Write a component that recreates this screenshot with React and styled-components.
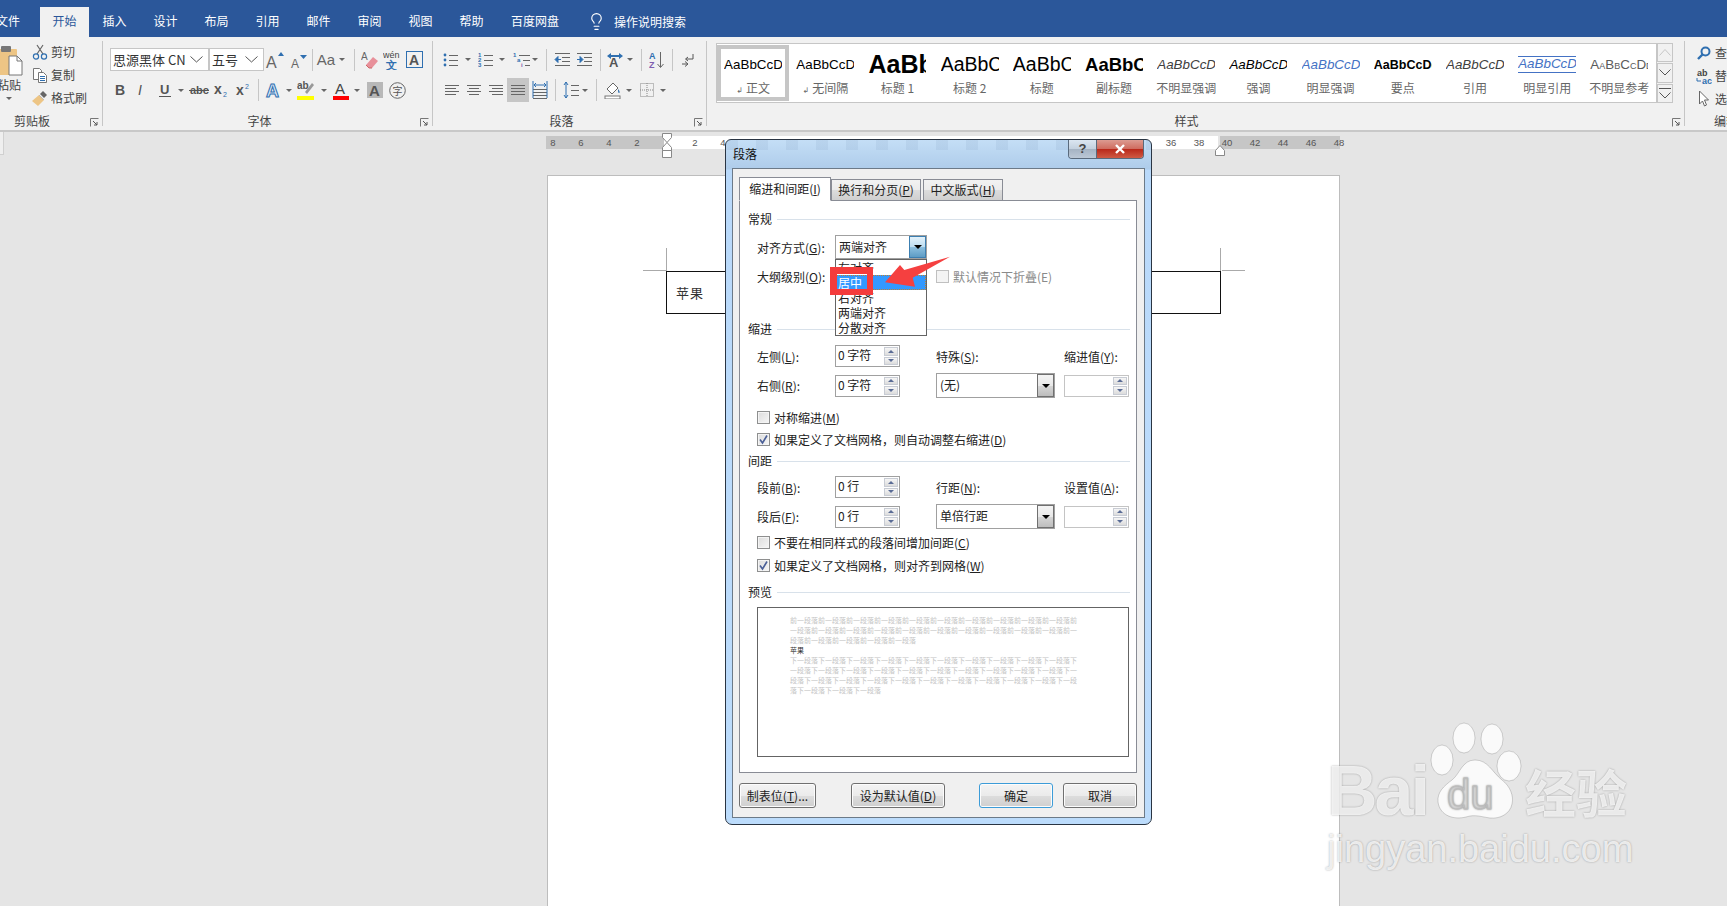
import React from 'react';
import styled, { createGlobalStyle } from 'styled-components';
import { Lightbulb } from 'lucide-react';

const CJK = '"Noto Sans CJK SC", "Noto Sans", sans-serif';
const LATIN = '"Liberation Sans", Arial, sans-serif';

const Global = createGlobalStyle`
  html, body { margin: 0; padding: 0; overflow: hidden; }
  * { box-sizing: border-box; }
  body { font-family: ${CJK}; font-size: 12px; color: #222; }
  svg text { font-family: ${LATIN}; }
  svg { display: block; flex-shrink: 0; }
`;

const Screen = styled.div`
  position: relative;
  width: 1727px;
  height: 906px;
  overflow: hidden;
  display: flex;
  flex-direction: column;
  background: #e5e5e5;
`;

/* title tabs */
const MenuBar = styled.div`
  height: 37px;
  background: #2b579a;
  display: flex;
  align-items: flex-end;
  flex-shrink: 0;
`;
const MenuTab = styled.div`
  width: ${p => p.$w || 51}px;
  margin-left: ${p => p.$ml || 0}px;
  height: 30px;
  line-height: 27px;
  text-align: center;
  color: ${p => (p.$active ? '#2b579a' : '#fff')};
  background: ${p => (p.$active ? '#f1f1f1' : 'transparent')};
  font-size: 12px;
  flex-shrink: 0;
`;
const TellMe = styled.div`
  display: flex;
  align-items: center;
  gap: 8px;
  margin-left: 14px;
  height: 30px;
  color: #fff;
  padding-bottom: 2px;
`;

/* ribbon */
const Ribbon = styled.div`
  height: 95px;
  flex-shrink: 0;
  padding-top: 4px;
  background: #f1f1f1;
  border-bottom: 2px solid #c8c8c8;
  display: flex;
`;
const Group = styled.div`
  position: relative;
  flex: ${p => (p.$w ? `0 0 ${p.$w}px` : '1')};
  height: 85px;
  border-right: ${p => (p.$w ? '1px solid #c6c6c6' : 'none')};
  display: flex;
  flex-direction: column;
`;
const GroupLabel = styled.div`
  margin-top: auto;
  margin-bottom: -4px;
  height: 18px;
  line-height: 18px;
  text-align: center;
  color: #444;
  font-size: 12px;
  white-space: nowrap;
  margin-left: ${p => p.$ml || 0}px;
`;
const EditLabel = styled(GroupLabel)`
  text-align: left;
  padding-left: 29px;
`;
const Launcher = styled.div`
  position: absolute;
  right: 3px;
  bottom: -1px;
`;
const Tools = styled.div`
  display: flex;
  height: ${p => p.$h || 24}px;
  margin-top: ${p => p.$mt || 0}px;
  padding-left: ${p => p.$pl || 0}px;
  align-items: center;
`;
const Slot = styled.div`
  flex: 0 0 ${p => p.$w}px;
  width: ${p => p.$w}px;
  height: ${p => p.$h || 24}px;
  display: flex;
  align-items: center;
  justify-content: center;
  background: ${p => (p.$active ? '#c6c6c6' : 'transparent')};
  overflow: visible;
`;
const Sep = styled(Slot)`
  &::after {
    content: '';
    width: 1px;
    height: 22px;
    background: #c6c6c6;
  }
`;
const Caret = styled(Slot)`
  &::after {
    content: '';
    border-left: 3px solid transparent;
    border-right: 3px solid transparent;
    border-top: 3px solid #666;
  }
`;
const CaseGlyph = styled.span`
  font-family: ${LATIN};
  font-size: 15px;
  color: #666;
`;
const Combo = styled.div`
  width: ${p => p.$w}px;
  height: 23px;
  flex-shrink: 0;
  border: 1px solid #c6c6c6;
  background: #fff;
  display: flex;
  align-items: center;
  justify-content: space-between;
  padding: 0 5px 0 2px;
  font-size: 13px;
  color: #333;
  white-space: nowrap;
`;

const ClipRow = styled.div`
  display: flex;
  flex: 1;
`;
const PasteCol = styled.div`
  width: 30px;
  margin-left: -6px;
  margin-right: 8px;
  padding-top: 4px;
  display: flex;
  flex-direction: column;
  align-items: center;
  color: #444;
  line-height: 18px;
`;
const SmallCol = styled.div`
  display: flex;
  flex-direction: column;
  margin-top: -1px;
`;
const SmallTool = styled.div`
  height: 23px;
  display: flex;
  align-items: center;
  gap: 3px;
  color: #444;
  white-space: nowrap;
`;
const IconBox = styled.div`
  width: 16px;
  display: flex;
  justify-content: center;
`;
const PasteCaret = styled.div`
  margin-top: 3px;
  border-left: 3px solid transparent;
  border-right: 3px solid transparent;
  border-top: 3px solid #666;
`;

const Gallery = styled.div`
  margin: 2px 0 0 9px;
  width: 957px;
  height: 60px;
  display: flex;
`;
const GalleryItems = styled.div`
  flex: 0 0 941px;
  border: 1px solid #c6c6c6;
  background: #fff;
  display: flex;
`;
const StyleItem = styled.div`
  flex: 0 0 72.2px;
  height: 56px;
  margin-top: 1px;
  border: ${p => (p.$active ? '4px solid #c6c6c6' : '4px solid transparent')};
  display: flex;
  flex-direction: column;
  align-items: center;
`;
const StyleSample = styled.div`
  width: 58px;
  height: 30px;
  margin-top: 1px;
  overflow: hidden;
  white-space: nowrap;
  display: flex;
  align-items: center;
  font-family: ${LATIN};
  font-size: ${p => p.$size || 13.4}px;
  font-weight: ${p => (p.$bold ? 700 : 400)};
  font-style: ${p => (p.$italic ? 'italic' : 'normal')};
  font-variant: ${p => (p.$caps ? 'small-caps' : 'normal')};
  color: ${p => p.$color || '#000'};
`;
const LinedText = styled.span`
  border-top: 1px solid #4472c4;
  border-bottom: 1px solid #4472c4;
  line-height: 14px;
  padding-bottom: 1px;
`;
const StyleName = styled.div`
  height: 18px;
  line-height: 18px;
  color: #666;
  font-size: 12px;
  white-space: nowrap;
`;
const ParaMark = styled.span`
  font-family: "DejaVu Sans", sans-serif;
  font-size: 8px;
  margin-right: 3px;
`;
const GalleryScroll = styled.div`
  flex: 0 0 16px;
  display: flex;
  flex-direction: column;
  gap: 1px;
`;
const ScrollBtn = styled.div`
  flex: 1;
  border: 1px solid #c6c6c6;
  background: #f1f1f1;
  display: flex;
  align-items: center;
  justify-content: center;
`;

/* workspace */
const Workspace = styled.div`
  flex: 1;
  min-height: 0;
  padding-left: 546px;
  display: flex;
  flex-direction: column;
  position: relative;
`;
const SideStub = styled.div`
  position: absolute;
  left: 0;
  top: 0;
  width: 4px;
  height: 23px;
  background: #efefef;
  border-right: 1px solid #d0d0d0;
  border-bottom: 1px solid #d0d0d0;
`;
const Ruler = styled.div`
  position: relative;
  margin-top: 4px;
  height: 13px;
  display: flex;
  flex-shrink: 0;
`;
const RulerPart = styled.div`
  flex: 0 0 ${p => p.$w}px;
  min-width: 0;
  margin-left: ${p => p.$ml || 0}px;
  height: 13px;
  background: ${p => (p.$white ? '#fff' : '#c6c6c6')};
  padding-left: ${p => p.$pl || 0}px;
  display: flex;
`;
const Tick = styled.span`
  flex: 0 0 28px;
  margin-left: ${p => p.$ml || 0}px;
  text-align: center;
  font-family: ${LATIN};
  font-size: 9.5px;
  line-height: 14px;
  color: #555;
`;
const Marker = styled.div`
  position: absolute;
  left: ${p => p.$x}px;
  top: ${p => p.$y}px;
`;
const Page = styled.div`
  margin: 26px 0 0 1px;
  width: 793px;
  flex: 1;
  background: #fff;
  border: 1px solid #bdbdbd;
  border-bottom: none;
  padding: 95px 0 0 118px;
`;
const DocTable = styled.div`
  position: relative;
  width: 555px;
  height: 43px;
  border: 1px solid #111;
  padding-left: 9px;
  display: flex;
  align-items: center;
  font-size: 13px;
  letter-spacing: 1px;
  color: #333;
`;
const CropV = styled.div`
  position: absolute;
  top: -24px;
  ${p => (p.$right ? 'right: -1px' : 'left: -1px')};
  width: 1px;
  height: 23px;
  background: #aaa;
`;
const CropH = styled.div`
  position: absolute;
  top: -2px;
  ${p => (p.$right ? 'right: -25px' : 'left: -24px')};
  width: 23px;
  height: 1px;
  background: #aaa;
`;

/* dialog */
const Dialog = styled.div`
  position: absolute;
  left: 725px;
  top: 139px;
  width: 427px;
  height: 686px;
  border: 1px solid #2a3543;
  border-radius: 6px 6px 7px 7px;
  background:
    repeating-linear-gradient(90deg, rgba(120,150,185,0.14) 0 12px, transparent 12px 30px) 0 0 / 100% 10px no-repeat,
    linear-gradient(180deg, #c4def6 0, #aeccea 29px, #b9d9fa 30px, #bcdcfc 100%);
  padding: 0 6px 6px;
  display: flex;
  flex-direction: column;
`;
const DialogTitle = styled.div`
  height: 28px;
  display: flex;
  justify-content: space-between;
  flex-shrink: 0;
  font-size: 12px;
  color: #111;
`;
const DialogName = styled.div`
  line-height: 27px;
  padding-left: 1px;
`;
const CaptionBtns = styled.div`
  display: flex;
  height: 19px;
  border: 1px solid #5a6a7c;
  border-top: none;
  border-radius: 0 0 4px 4px;
  overflow: hidden;
  margin-right: 1px;
`;
const HelpBtn = styled.div`
  width: 28px;
  text-align: center;
  line-height: 18px;
  font-family: ${LATIN};
  font-weight: 700;
  font-size: 13px;
  color: #444;
  background: linear-gradient(180deg, #dbe6f1 0, #c3d0de 50%, #a5b3c3 51%, #bcc8d6 100%);
  border-right: 1px solid #5a6a7c;
`;
const CloseBtn = styled.div`
  width: 46px;
  display: flex;
  align-items: center;
  justify-content: center;
  background: linear-gradient(180deg, #dc9b91 0, #cf6b5e 50%, #b9281a 51%, #cf5a44 100%);
`;
const DialogBody = styled.div`
  flex: 1;
  min-height: 0;
  border: 1px solid #6c7a88;
  background: #f0f0f0;
  padding: 8px 7px 0 6px;
  display: flex;
  flex-direction: column;
`;
const TabRow = styled.div`
  display: flex;
  height: 24px;
  align-items: flex-end;
  position: relative;
  z-index: 1;
  margin-bottom: -1px;
`;
const DlgTab = styled.div`
  width: ${p => p.$w}px;
  margin-left: ${p => p.$ml || 0}px;
  height: ${p => (p.$active ? 24 : 22)}px;
  line-height: ${p => (p.$active ? 22 : 20)}px;
  text-align: center;
  font-size: 12px;
  white-space: nowrap;
  border: 1px solid #898c95;
  border-bottom: ${p => (p.$active ? '1px solid #fff' : '1px solid #898c95')};
  background: ${p => (p.$active ? '#fff' : 'linear-gradient(180deg, #f2f2f2 0, #ebebeb 50%, #dddddd 51%, #cfcfcf 100%)')};
`;
const TabPanel = styled.div`
  height: 573px;
  border: 1px solid #898c95;
  background: #fff;
  padding: 10px 6px 0 8px;
`;
const SectionHead = styled.div`
  height: 16px;
  margin-top: ${p => p.$mt || 0}px;
  display: flex;
  align-items: center;
  gap: 5px;
  line-height: 16px;
  &::after {
    content: '';
    flex: 1;
    height: 1px;
    background: #d8e1ea;
  }
`;
const FormGrid = styled.div`
  display: grid;
  grid-template-columns: 78px 101px 128px 65px;
  align-items: center;
  margin: ${p => p.$mt || 0}px 0 0 9px;
  height: ${p => p.$h || 22}px;
  white-space: nowrap;
`;
const SelectWrap = styled.div`
  position: relative;
  width: ${p => p.$w}px;
  height: ${p => p.$h || 25}px;
  border: 1px solid #a0a0a0;
  background: #fff;
  padding-left: ${p => p.$pl || 3}px;
  line-height: ${p => (p.$h || 25) - 3}px;
  display: flex;
  justify-content: space-between;
`;
const SelectBtn = styled.div`
  width: 17px;
  border: 1px solid ${p => (p.$hot ? '#3c7fb1' : '#707070')};
  background: ${p => (p.$hot
    ? 'linear-gradient(180deg, #e3f2fb 0, #bcdcf0 50%, #8cbfdf 51%, #5e9cc4 100%)'
    : 'linear-gradient(180deg, #f4f4f4 0, #e8e8e8 50%, #d6d6d6 51%, #bdbdbd 100%)')};
  display: flex;
  align-items: center;
  justify-content: center;
  &::after {
    content: '';
    border-left: 4px solid transparent;
    border-right: 4px solid transparent;
    border-top: 4px solid #000;
  }
`;
const DropList = styled.div`
  position: absolute;
  left: -1px;
  top: 23px;
  width: 92px;
  height: 77px;
  border: 1px solid #646464;
  background: #fff;
  z-index: 2;
`;
const DropItem = styled.div`
  height: 15px;
  line-height: 15px;
  padding-left: 2px;
  overflow: hidden;
  color: ${p => (p.$sel ? '#fff' : '#222')};
  background: ${p => (p.$sel ? '#3399ff' : 'transparent')};
  outline: ${p => (p.$sel ? '1px dotted #c08030' : 'none')};
  outline-offset: -1px;
`;
const RedBox = styled.div`
  position: absolute;
  left: -6px;
  top: 31px;
  width: 43px;
  height: 28px;
  border: 7px solid #f43c3c;
  border-width: 7px 6px 6px 7px;
  z-index: 3;
`;
const ArrowMark = styled.div`
  position: absolute;
  left: 47px;
  top: 17px;
  z-index: 4;
`;
const Spin = styled.div`
  width: 65px;
  height: 22px;
  border: 1px solid ${p => (p.$off ? '#c4c4c4' : '#a0a0a0')};
  background: #fff;
  padding-left: 2px;
  line-height: 18px;
  display: flex;
  white-space: pre;
`;
const SpinBtns = styled.div`
  width: 15px;
  margin-left: auto;
  padding: 1px 1px 1px 0;
  display: flex;
  flex-direction: column;
  gap: 1px;
`;
const SpinBtn = styled.div`
  flex: 1;
  border: 1px solid #c8ccd4;
  background: linear-gradient(180deg, #f6f6f6 0, #dcdcdc 100%);
  display: flex;
  align-items: center;
  justify-content: center;
  &::after {
    content: '';
    border-left: 3px solid transparent;
    border-right: 3px solid transparent;
    ${p => (p.$down ? 'border-top' : 'border-bottom')}: 3px solid #5a6c96;
  }
`;
const CheckRow = styled.label`
  display: flex;
  align-items: center;
  gap: 4px;
  height: 16px;
  margin: ${p => p.$mt || 0}px 0 0 ${p => (p.$off ? 0 : 9)}px;
  color: ${p => (p.$off ? '#8a8a8a' : '#222')};
  white-space: nowrap;
`;
const Box = styled.span`
  width: 13px;
  height: 13px;
  flex-shrink: 0;
  border: 1px solid ${p => (p.$off ? '#c0c0c0' : '#8e8f8f')};
  background: ${p => (p.$off ? '#f4f4f4' : 'linear-gradient(135deg, #dcdcdc 0, #f6f6f6 100%)')};
  box-shadow: inset 0 0 0 1px #f4f4f4;
  display: flex;
  align-items: center;
  justify-content: center;
`;
const Preview = styled.div`
  margin: 7px 0 0 9px;
  width: 372px;
  height: 150px;
  border: 1px solid #646464;
  background: #fff;
  padding: 7px 0 0 32px;
`;
const PreviewText = styled.div`
  width: 288px;
  font-size: 7px;
  line-height: 10px;
  word-break: break-all;
  color: ${p => (p.$dark ? '#333' : '#c4c4c4')};
`;
const BtnRow = styled.div`
  display: flex;
  margin-top: 10px;
`;
const DlgBtn = styled.div`
  width: ${p => p.$w}px;
  margin-left: ${p => p.$ml || 0}px;
  height: 25px;
  line-height: 23px;
  text-align: center;
  border: 1px solid ${p => (p.$def ? '#3c9cd8' : '#707070')};
  border-radius: 3px;
  box-shadow: inset 0 0 0 1px #fcfcfc;
  background: linear-gradient(180deg, #f3f3f3 0, #ebebeb 50%, #dddddd 51%, #cfcfcf 100%);
  white-space: nowrap;
`;

/* watermark */
const Watermark = styled.div`
  position: absolute;
  left: 1327px;
  top: 722px;
  color: rgba(255, 255, 255, 0.8);
  text-shadow: 0 0 2px rgba(0, 0, 0, 0.35);
  pointer-events: none;
`;
const WmTop = styled.div`
  display: flex;
  align-items: flex-end;
  height: 98px;
`;
const WmLatin = styled.div`
  font-family: ${LATIN};
  font-weight: 700;
  font-size: 70px;
  line-height: 58px;
  letter-spacing: -3px;
  width: 103px;
`;
const WmCjk = styled.div`
  font-weight: 700;
  font-size: 51px;
  line-height: 58px;
  margin-left: 3px;
  white-space: nowrap;
`;
const WmUrl = styled.div`
  font-family: ${LATIN};
  font-size: 38px;
  line-height: 46px;
  margin-top: 6px;
  white-space: nowrap;
`;

/* small drawings */
const I = ({ w = 16, h = 16, children }) => (
  <svg width={w} height={h} viewBox={`0 0 ${w} ${h}`} fill="none">{children}</svg>
);
const Lines = ({ items, color = '#666' }) => items.map(([x1, x2, y], i) => (
  <line key={i} x1={x1} x2={x2} y1={y + 0.5} y2={y + 0.5} stroke={color} />
));
const Glyph = ({ x = 0, y = 13, s = 14, c = '#555', b, it, children }) => (
  <text x={x} y={y} fontSize={s} fill={c} fontWeight={b ? 700 : 400} fontStyle={it ? 'italic' : 'normal'}>{children}</text>
);

const PasteIcon = () => (
  <I w={32} h={31}>
    <rect x="2" y="4" width="22" height="26" rx="1" fill="#edc585" />
    <rect x="8" y="1" width="10" height="6" rx="1" fill="#777" />
    <path d="M16 11h8l5 5v14H16z" fill="#fff" stroke="#777" />
    <path d="M24 11v5h5" stroke="#777" />
  </I>
);
const CutIcon = () => (
  <I>
    <path d="M5 10 11 1M11 10 5 1" stroke="#666" strokeWidth="1.2" />
    <circle cx="4" cy="12.5" r="2.6" stroke="#2f6fb0" strokeWidth="1.2" />
    <circle cx="12" cy="12.5" r="2.6" stroke="#2f6fb0" strokeWidth="1.2" />
  </I>
);
const CopyIcon = () => (
  <I>
    <path d="M1.5 1.5h6l2 2v9h-8z" fill="#fff" stroke="#777" />
    <path d="M6.5 5.5h5l3 3v7h-8z" fill="#fff" stroke="#777" />
    <Lines color="#2f6fb0" items={[[8, 13, 9], [8, 13, 11], [8, 13, 13]]} />
  </I>
);
const BrushIcon = () => (
  <I w={18} h={16}>
    <path d="M1 11 8 5l5 5-6 6z" fill="#edc585" />
    <path d="M9 4l3-3 4 4-3 3z" fill="#666" />
    <path d="M8 5l5 5" stroke="#bbb" />
  </I>
);
const GrowIcon = ({ small }) => (
  <I w={20} h={18}>
    <Glyph x={small ? 3 : 1} y={17} s={small ? 12 : 16} c="#666">A</Glyph>
    <path d={small ? 'M12 4h7l-3.5 4z' : 'M13 5h6l-3-4z'} fill="#2f6fb0" />
  </I>
);
const EraserIcon = () => (
  <I w={18} h={18}>
    <Glyph x={0} y={9} s={10} c="#666">A</Glyph>
    <path d="M5 14l7-8 5 4-6 7H8z" fill="#e8909a" />
    <path d="M5 14l3 3h3" stroke="#c66" />
  </I>
);
const PinyinIcon = () => (
  <I w={18} h={20}>
    <Glyph x={0} y={8} s={9} c="#444">wén</Glyph>
    <Glyph x={3} y={19} s={11} c="#2f6fb0" b>文</Glyph>
  </I>
);
const BoxA = () => (
  <I w={17} h={17}>
    <rect x="0.5" y="0.5" width="16" height="16" stroke="#2f6fb0" />
    <Glyph x={3} y={14} s={14} c="#555" b>A</Glyph>
  </I>
);
const Bold = () => <I><Glyph x={3} y={13} b>B</Glyph></I>;
const Ital = () => <I><Glyph x={4} y={13} it>I</Glyph></I>;
const Under = () => (
  <I><Glyph x={3} y={12} s={13} b>U</Glyph><line x1="2" x2="14" y1="14.5" y2="14.5" stroke="#555" /></I>
);
const Strike = () => (
  <I w={20}><Glyph x={1} y={12} s={11} b>abc</Glyph><line x1="0" x2="20" y1="8.5" y2="8.5" stroke="#555" /></I>
);
const Sub = () => <I><Glyph x={1} y={12} s={14} b>x</Glyph><Glyph x={10} y={15} s={7} c="#2f6fb0">2</Glyph></I>;
const Sup = () => <I><Glyph x={1} y={13} s={14} b>x</Glyph><Glyph x={10} y={7} s={7} c="#2f6fb0">2</Glyph></I>;
const EffectA = () => (
  <I w={18} h={18}>
    <text x="2" y="16" fontSize="18" fontWeight="700" fill="#dbe8f6" stroke="#2f6fb0">A</text>
  </I>
);
const Highlight = () => (
  <I w={18} h={20}>
    <Glyph x={0} y={9} s={10} b>ab</Glyph>
    <path d="M8 12 15 3l2 2-7 9z" fill="#999" />
    <rect x="0" y="16" width="17" height="4" fill="#ffff00" />
  </I>
);
const RedA = () => (
  <I w={18} h={20}>
    <Glyph x={3} y={14} s={15} c="#444">A</Glyph>
    <rect x="1" y="16" width="16" height="4" fill="#ff0000" />
  </I>
);
const GrayA = () => (
  <I w={16} h={16}>
    <rect width="16" height="16" fill="#b8b8b8" />
    <Glyph x={2} y={14} s={15} c="#555" b>A</Glyph>
  </I>
);
const CircleZi = () => (
  <I w={17} h={17}>
    <circle cx="8.5" cy="8.5" r="7.8" stroke="#666" />
    <text x="3.5" y="12.5" fontSize="10" fill="#555" style={{ fontFamily: CJK }}>字</text>
  </I>
);
const Bullets = () => (
  <I>
    <circle cx="2" cy="3" r="1.4" fill="#2f6fb0" /><circle cx="2" cy="8" r="1.4" fill="#2f6fb0" /><circle cx="2" cy="13" r="1.4" fill="#2f6fb0" />
    <Lines items={[[6, 15, 3], [6, 15, 8], [6, 15, 13]]} />
  </I>
);
const Numbers = () => (
  <I>
    <Glyph x={0} y={5} s={6} c="#2f6fb0" b>1</Glyph><Glyph x={0} y={10} s={6} c="#2f6fb0" b>2</Glyph><Glyph x={0} y={15} s={6} c="#2f6fb0" b>3</Glyph>
    <Lines items={[[6, 15, 3], [6, 15, 8], [6, 15, 13]]} />
  </I>
);
const MultiList = () => (
  <I w={18}>
    <Glyph x={0} y={5} s={6} c="#2f6fb0" b>1</Glyph><Glyph x={4} y={10} s={6} c="#2f6fb0" b>a</Glyph><Glyph x={8} y={15} s={6} c="#7f5fb0" b>i</Glyph>
    <Lines items={[[6, 17, 3], [10, 17, 8], [12, 17, 13]]} />
  </I>
);
const IndentIcon = ({ inc }) => (
  <I w={17}>
    <Lines items={[[1, 16, 1], [8, 16, 5], [8, 16, 9], [1, 16, 13]]} />
    <path d={inc ? 'M1 7.5h4M4 4.5l3 3-3 3z' : 'M7 7.5H3M4 4.5l-3 3 3 3z'} stroke="#2f6fb0" fill="#2f6fb0" />
  </I>
);
const CnLayout = () => (
  <I w={18} h={17}>
    <Glyph x={3} y={16} s={13} b>A</Glyph>
    <path d="M1 5 5 2v2h8V2l4 3-4 3V6H5v2z" fill="#2f6fb0" />
  </I>
);
const Sort = () => (
  <I w={16} h={18}>
    <Glyph x={0} y={8} s={9} c="#2f6fb0" b>A</Glyph>
    <Glyph x={0} y={17} s={9} c="#7f5fb0" b>Z</Glyph>
    <path d="M11.5 1v15M8.5 13l3 3.5 3-3.5" stroke="#666" />
  </I>
);
const Pilcrow = () => (
  <I>
    <path d="M13 2v5H6M8 5 5.5 7 8 9" stroke="#555" />
    <path d="M2 12h5M5 9.5 8 12l-3 2.5" stroke="#555" />
  </I>
);
const AlignIcon = ({ mode }) => {
  const short = { left: [1, 12], center: [3, 13], right: [4, 15], full: [1, 15] }[mode];
  return (
    <I>
      <Lines items={[[1, 15, 3], [short[0], short[1], 6], [1, 15, 9], [short[0], short[1], 12]]} />
    </I>
  );
};
const Distribute = () => (
  <I w={16} h={18}>
    <Lines items={[[1, 15, 8], [1, 15, 11], [1, 15, 14], [1, 15, 17]]} />
    <path d="M1 0v17M15 0v17" stroke="#2f6fb0" />
    <path d="M2 4h12M4 2 2 4l2 2M12 2l2 2-2 2" stroke="#2f6fb0" />
  </I>
);
const LineSpacing = () => (
  <I w={16} h={18}>
    <path d="M3 1v16M1 4l2-3 2 3M1 14l2 3 2-3" stroke="#2f6fb0" />
    <Lines items={[[8, 16, 4], [8, 16, 9], [8, 16, 14]]} />
  </I>
);
const Shading = () => (
  <I w={18} h={18}>
    <path d="M3 8 9 2l5 5-6 6z" fill="#fff" stroke="#666" />
    <path d="M14 8c2 2 2 4 1 4s-1-2-1-4z" fill="#2f6fb0" />
    <rect x="1" y="15" width="15" height="3" fill="#fff" stroke="#777" />
  </I>
);
const Borders = () => (
  <I w={14} h={14}>
    <rect x="0.5" y="0.5" width="13" height="13" stroke="#888" strokeDasharray="1 1" />
    <path d="M7 0v14M0 7h14" stroke="#888" strokeDasharray="1 1" />
  </I>
);
const LauncherIcon = () => (
  <I w={9} h={9}>
    <path d="M.5 8.5v-8h8" stroke="#777" />
    <path d="M3 3l4 4M7 4v3H4" stroke="#555" />
  </I>
);
const Chevron = ({ w = 13, h = 7 }) => (
  <I w={w} h={h}><path d={`M.5 .5 ${w / 2} ${h - 1} ${w - 0.5} .5`} stroke="#555" /></I>
);
const Find = () => (
  <I w={14} h={14}>
    <circle cx="8.5" cy="5.5" r="4" stroke="#2f6fb0" strokeWidth="2" />
    <path d="M5.5 8.5 1 13" stroke="#2f6fb0" strokeWidth="2.4" />
  </I>
);
const Replace = () => (
  <I w={16} h={16}>
    <Glyph x={1} y={8} s={9} c="#444" b>ab</Glyph>
    <Glyph x={6} y={16} s={9} c="#2f6fb0" b>ac</Glyph>
    <path d="M1 10v3h4" stroke="#2f6fb0" />
  </I>
);
const Pointer = () => (
  <I w={12} h={17}>
    <path d="M1.500 1v13l3-3 2 5 2-1-2-5h4z" fill="#fff" stroke="#666" />
  </I>
);
const CloseX = () => (
  <I w={12} h={10}><path d="M2 1l8 8M10 1 2 9" stroke="#fff" strokeWidth="2.4" /></I>
);
const Tick2 = () => (
  <I w={11} h={11}><path d="M2 5.5 4.5 9 9 1.5" stroke="#4a5f97" strokeWidth="1.6" /></I>
);
const Arrow = () => (
  <I w={72} h={36}>
    <path d="M2 29.300 17 12l4.300 5L67 3.700 29.700 24.700 32 33.700z" fill="#f54040" />
  </I>
);
const Paw = () => (
  <I w={92} h={98}>
    <g fill="rgba(255,255,255,.8)" stroke="rgba(0,0,0,.16)">
      <ellipse cx="12" cy="38" rx="11" ry="15" />
      <ellipse cx="34" cy="16" rx="11" ry="15" />
      <ellipse cx="62" cy="17" rx="11" ry="15" />
      <ellipse cx="79" cy="44" rx="12" ry="15" />
      <path d="M45 38C58 38 62 50 72 58 80 64 84 74 82 82 80 92 70 97 60 96 52 95 45 92 36 95 24 98 10 94 8 80 7 70 14 64 22 58 30 52 32 38 45 38z" />
    </g>
    <text x="17" y="87" fontSize="42" fill="#dfdfdf" stroke="#bdbdbd">du</text>
  </I>
);

const styleItems = [
  { name: '正文', mark: true, active: true, text: 'AaBbCcDd' },
  { name: '无间隔', mark: true, text: 'AaBbCcDd' },
  { name: '标题 1', text: 'AaBb', size: 25, bold: true },
  { name: '标题 2', text: 'AaBbC', size: 19.5 },
  { name: '标题', text: 'AaBbC', size: 19.5 },
  { name: '副标题', text: 'AaBbC', size: 18.5, bold: true },
  { name: '不明显强调', text: 'AaBbCcDd', italic: true, color: '#404040' },
  { name: '强调', text: 'AaBbCcDd', italic: true },
  { name: '明显强调', text: 'AaBbCcDd', italic: true, color: '#4472c4' },
  { name: '要点', text: 'AaBbCcDd', bold: true, size: 12.5 },
  { name: '引用', text: 'AaBbCcDd', italic: true, color: '#404040' },
  { name: '明显引用', text: 'AaBbCcDd', italic: true, color: '#4472c4', lined: true },
  { name: '不明显参考', text: 'AaBbCcDd', caps: true, color: '#5a5a5a' },
];

const menuTabs = ['插入', '设计', '布局', '引用', '邮件', '审阅', '视图', '帮助'];
const ticks = (from, to) => {
  const out = [];
  for (let n = from; from > to ? n >= to : n <= to; n += from > to ? -2 : 2) out.push(n);
  return out;
};

const SpinBox = ({ value, off }) => (
  <Spin $off={off}>
    {value}
    <SpinBtns><SpinBtn /><SpinBtn $down /></SpinBtns>
  </Spin>
);
const Check = ({ checked, off, mt, children }) => (
  <CheckRow $mt={mt} $off={off}>
    <Box $off={off}>{checked && <Tick2 />}</Box>
    <span>{children}</span>
  </CheckRow>
);

export default function App() {
  return (
    <Screen>
      <Global />
      <MenuBar>
        <MenuTab $w={64} $ml={-24}>文件</MenuTab>
        <MenuTab $w={49} $active>开始</MenuTab>
        {menuTabs.map(t => <MenuTab key={t}>{t}</MenuTab>)}
        <MenuTab $w={76}>百度网盘</MenuTab>
        <TellMe>
          <Lightbulb size={19} strokeWidth={1.4} color="#fff" />
          <span>操作说明搜索</span>
        </TellMe>
      </MenuBar>

      <Ribbon>
        <Group $w={103}>
          <ClipRow>
            <PasteCol>
              <PasteIcon />
              <span>粘贴</span>
              <PasteCaret />
            </PasteCol>
            <SmallCol>
              <SmallTool><IconBox><CutIcon /></IconBox>剪切</SmallTool>
              <SmallTool><IconBox><CopyIcon /></IconBox>复制</SmallTool>
              <SmallTool><IconBox><BrushIcon /></IconBox>格式刷</SmallTool>
            </SmallCol>
          </ClipRow>
          <GroupLabel $ml={-38}>剪贴板</GroupLabel>
          <Launcher><LauncherIcon /></Launcher>
        </Group>

        <Group $w={330}>
          <Tools $mt={7} $h={23} $pl={7}>
            <Combo $w={99}>思源黑体 CN<Chevron /></Combo>
            <Combo $w={55}>五号<Chevron /></Combo>
            <Slot $w={22}><GrowIcon /></Slot>
            <Slot $w={24}><GrowIcon small /></Slot>
            <Sep $w={4} />
            <Slot $w={24}><CaseGlyph>Aa</CaseGlyph></Slot>
            <Caret $w={8} />
            <Sep $w={16} />
            <Slot $w={16}><EraserIcon /></Slot>
            <Slot $w={28}><PinyinIcon /></Slot>
            <Slot $w={16}><BoxA /></Slot>
          </Tools>
          <Tools $mt={7} $pl={7}>
            <Slot $w={20}><Bold /></Slot>
            <Slot $w={24}><Ital /></Slot>
            <Slot $w={22}><Under /></Slot>
            <Caret $w={10} />
            <Slot $w={26}><Strike /></Slot>
            <Slot $w={18}><Sub /></Slot>
            <Slot $w={26}><Sup /></Slot>
            <Sep $w={4} />
            <Slot $w={26}><EffectA /></Slot>
            <Caret $w={6} />
            <Slot $w={28}><Highlight /></Slot>
            <Caret $w={8} />
            <Slot $w={26}><RedA /></Slot>
            <Caret $w={6} />
            <Slot $w={30}><GrayA /></Slot>
            <Slot $w={14}><CircleZi /></Slot>
          </Tools>
          <GroupLabel $ml={-16}>字体</GroupLabel>
          <Launcher><LauncherIcon /></Launcher>
        </Group>

        <Group $w={274}>
          <Tools $mt={7} $h={23} $pl={8}>
            <Slot $w={20}><Bullets /></Slot>
            <Caret $w={14} />
            <Slot $w={22}><Numbers /></Slot>
            <Caret $w={10} />
            <Slot $w={4} />
            <Slot $w={21}><MultiList /></Slot>
            <Caret $w={6} />
            <Sep $w={16} />
            <Slot $w={16}><IndentIcon /></Slot>
            <Slot $w={28}><IndentIcon inc /></Slot>
            <Sep $w={4} />
            <Slot $w={26}><CnLayout /></Slot>
            <Caret $w={4} />
            <Sep $w={18} />
            <Slot $w={14}><Sort /></Slot>
            <Sep $w={16} />
            <Slot $w={16}><Pilcrow /></Slot>
          </Tools>
          <Tools $mt={7} $pl={8}>
            <Slot $w={22}><AlignIcon mode="left" /></Slot>
            <Slot $w={22}><AlignIcon mode="center" /></Slot>
            <Slot $w={22}><AlignIcon mode="right" /></Slot>
            <Slot $w={22} $active><AlignIcon mode="full" /></Slot>
            <Slot $w={22}><Distribute /></Slot>
            <Sep $w={8} />
            <Slot $w={23}><LineSpacing /></Slot>
            <Caret $w={6} />
            <Sep $w={17} />
            <Slot $w={16}><Shading /></Slot>
            <Caret $w={16} />
            <Slot $w={20}><Borders /></Slot>
            <Caret $w={12} />
          </Tools>
          <GroupLabel $ml={-16}>段落</GroupLabel>
          <Launcher><LauncherIcon /></Launcher>
        </Group>

        <Group $w={978}>
          <Gallery>
            <GalleryItems>
              {styleItems.map(s => (
                <StyleItem key={s.name} $active={s.active}>
                  <StyleSample $size={s.size} $bold={s.bold} $italic={s.italic} $color={s.color} $caps={s.caps}>
                    {s.lined ? <LinedText>{s.text}</LinedText> : s.text}
                  </StyleSample>
                  <StyleName>{s.mark && <ParaMark>↲</ParaMark>}{s.name}</StyleName>
                </StyleItem>
              ))}
            </GalleryItems>
            <GalleryScroll>
              <ScrollBtn><I w={12} h={7}><path d="M.5 6.500 6 .5l5.500 6" stroke="#c6c6c6" /></I></ScrollBtn>
              <ScrollBtn><Chevron w={12} /></ScrollBtn>
              <ScrollBtn><I w={12} h={11}><path d="M0 .5h12M.5 4.500 6 10l5.500-5.500" stroke="#555" /></I></ScrollBtn>
            </GalleryScroll>
          </Gallery>
          <GroupLabel $ml={-18}>样式</GroupLabel>
          <Launcher><LauncherIcon /></Launcher>
        </Group>

        <Group>
          <Tools $pl={11} $h={23}><SmallTool><IconBox><Find /></IconBox>查找</SmallTool></Tools>
          <Tools $pl={11} $h={23}><SmallTool><IconBox><Replace /></IconBox>替换</SmallTool></Tools>
          <Tools $pl={11} $h={23}><SmallTool><IconBox><Pointer /></IconBox>选择</SmallTool></Tools>
          <EditLabel>编辑</EditLabel>
        </Group>
      </Ribbon>

      <Workspace>
        <SideStub />
        <Ruler>
          <RulerPart $w={118}>
            {ticks(8, 2).map((n, i) => <Tick key={n} $ml={i === 0 ? -7 : 0}>{n}</Tick>)}
          </RulerPart>
          <RulerPart $w={554} $white $pl={17}>
            {ticks(2, 38).map(n => <Tick key={n}>{n <= 4 || n >= 36 ? n : ''}</Tick>)}
          </RulerPart>
          <RulerPart $w={120} $ml={2}>
            {ticks(40, 48).map((n, i) => <Tick key={n} $ml={i === 0 ? -7 : 0}>{n}</Tick>)}
          </RulerPart>
          <Marker $x={116} $y={-3}>
            <I w={10} h={25}>
              <path d="M.5 .5h9v4l-4.500 5-4.500-5zM5 9.500l4.500 5v3h-9v-3zM.5 17.500h9v7h-9z" fill="#fff" stroke="#888" />
            </I>
          </Marker>
          <Marker $x={669} $y={9}>
            <I w={10} h={11}>
              <path d="M5 .5l4.500 5v5h-9v-5z" fill="#fff" stroke="#888" />
            </I>
          </Marker>
        </Ruler>
        <Page>
          <DocTable>
            <CropV /><CropH />
            <CropV $right /><CropH $right />
            苹果
          </DocTable>
        </Page>
      </Workspace>

      <Dialog>
        <DialogTitle>
          <DialogName>段落</DialogName>
          <CaptionBtns>
            <HelpBtn>?</HelpBtn>
            <CloseBtn><CloseX /></CloseBtn>
          </CaptionBtns>
        </DialogTitle>
        <DialogBody>
          <TabRow>
            <DlgTab $w={92} $active>缩进和间距(<u>I</u>)</DlgTab>
            <DlgTab $w={90}>换行和分页(<u>P</u>)</DlgTab>
            <DlgTab $w={80} $ml={2}>中文版式(<u>H</u>)</DlgTab>
          </TabRow>
          <TabPanel>
            <SectionHead>常规</SectionHead>
            <FormGrid $mt={8} $h={24}>
              <span>对齐方式(<u>G</u>):</span>
              <SelectWrap $w={92} $h={24}>
                两端对齐
                <SelectBtn $hot />
                <DropList>
                  <DropItem>左对齐</DropItem>
                  <DropItem $sel>居中</DropItem>
                  <DropItem>右对齐</DropItem>
                  <DropItem>两端对齐</DropItem>
                  <DropItem>分散对齐</DropItem>
                </DropList>
                <RedBox />
                <ArrowMark><Arrow /></ArrowMark>
              </SelectWrap>
            </FormGrid>
            <FormGrid $mt={9} $h={16}>
              <span>大纲级别(<u>O</u>):</span>
              <span />
              <Check off mt={0}>默认情况下折叠(E)</Check>
            </FormGrid>

            <SectionHead $mt={37}>缩进</SectionHead>
            <FormGrid $mt={8}>
              <span>左侧(<u>L</u>):</span>
              <SpinBox value="0 字符" />
              <span>特殊(<u>S</u>):</span>
              <span>缩进值(<u>Y</u>):</span>
            </FormGrid>
            <FormGrid $mt={6}>
              <span>右侧(<u>R</u>):</span>
              <SpinBox value="0 字符" />
              <SelectWrap $w={119}>
                (无)
                <SelectBtn />
              </SelectWrap>
              <SpinBox off value="" />
            </FormGrid>
            <Check mt={14}>对称缩进(<u>M</u>)</Check>
            <Check mt={6} checked>如果定义了文档网格，则自动调整右缩进(<u>D</u>)</Check>

            <SectionHead $mt={6}>间距</SectionHead>
            <FormGrid $mt={7}>
              <span>段前(<u>B</u>):</span>
              <SpinBox value="0 行" />
              <span>行距(<u>N</u>):</span>
              <span>设置值(<u>A</u>):</span>
            </FormGrid>
            <FormGrid $mt={6}>
              <span>段后(<u>F</u>):</span>
              <SpinBox value="0 行" />
              <SelectWrap $w={119}>
                单倍行距
                <SelectBtn />
              </SelectWrap>
              <SpinBox off value="" />
            </FormGrid>
            <Check mt={8}>不要在相同样式的段落间增加间距(<u>C</u>)</Check>
            <Check mt={7} checked>如果定义了文档网格，则对齐到网格(<u>W</u>)</Check>

            <SectionHead $mt={11}>预览</SectionHead>
            <Preview>
              <PreviewText>{'前一段落'.repeat(25)}</PreviewText>
              <PreviewText $dark>苹果</PreviewText>
              <PreviewText>{'下一段落'.repeat(34)}</PreviewText>
            </Preview>
          </TabPanel>
          <BtnRow>
            <DlgBtn $w={77}>制表位(<u>T</u>)...</DlgBtn>
            <DlgBtn $w={94} $ml={35}>设为默认值(<u>D</u>)</DlgBtn>
            <DlgBtn $w={74} $ml={34} $def>确定</DlgBtn>
            <DlgBtn $w={74} $ml={10}>取消</DlgBtn>
          </BtnRow>
        </DialogBody>
      </Dialog>

      <Watermark>
        <WmTop>
          <WmLatin>Bai</WmLatin>
          <Paw />
          <WmCjk>经验</WmCjk>
        </WmTop>
        <WmUrl>jingyan.baidu.com</WmUrl>
      </Watermark>
    </Screen>
  );
}
